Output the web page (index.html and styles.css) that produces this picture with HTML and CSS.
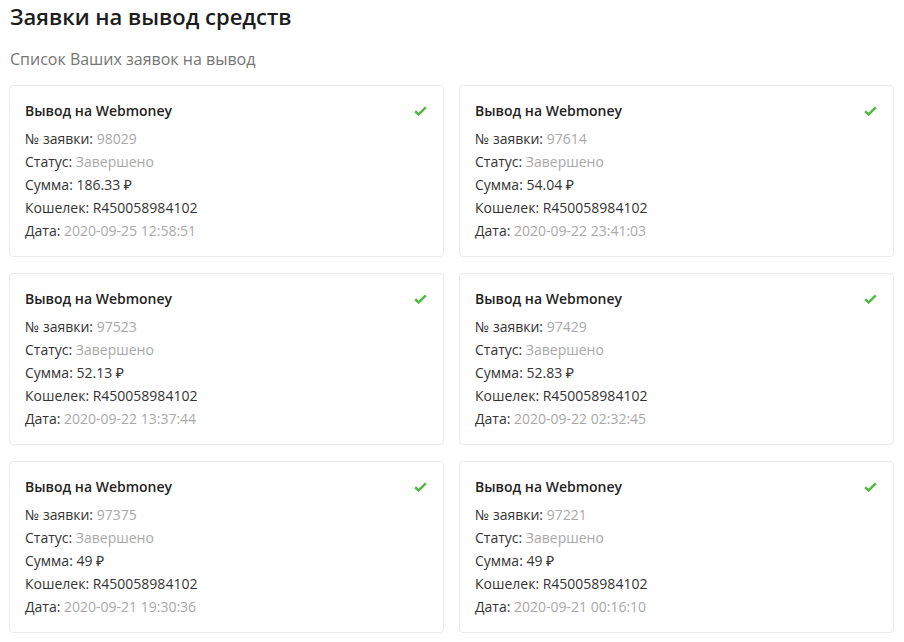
FILE: index.html
```html
<!DOCTYPE html>
<html lang="ru">
<head>
<meta charset="utf-8">
<title>Заявки на вывод средств</title>
<link rel="stylesheet" href="styles.css">
</head>
<body>
<div class="page">
  <h1 class="title">Заявки на вывод средств</h1>
  <p class="subtitle">Список Ваших заявок на вывод</p>
  <div class="grid">
    <div class="card">
      <div class="card-head"><span class="card-title">Вывод на Webmoney</span><svg class="check" width="13" height="10" viewBox="0 0 13 10"><path d="M1.2 5.2 L4.6 8.4 L11.8 1.4" fill="none" stroke="#55b846" stroke-width="2.6" stroke-linejoin="miter"/></svg></div>
      <div class="row">№ заявки: <span class="muted">98029</span></div>
      <div class="row">Статус: <span class="muted">Завершено</span></div>
      <div class="row">Сумма: 186.33 ₽</div>
      <div class="row">Кошелек: R450058984102</div>
      <div class="row">Дата: <span class="muted">2020-09-25 12:58:51</span></div>
    </div>
    <div class="card">
      <div class="card-head"><span class="card-title">Вывод на Webmoney</span><svg class="check" width="13" height="10" viewBox="0 0 13 10"><path d="M1.2 5.2 L4.6 8.4 L11.8 1.4" fill="none" stroke="#55b846" stroke-width="2.6" stroke-linejoin="miter"/></svg></div>
      <div class="row">№ заявки: <span class="muted">97614</span></div>
      <div class="row">Статус: <span class="muted">Завершено</span></div>
      <div class="row">Сумма: 54.04 ₽</div>
      <div class="row">Кошелек: R450058984102</div>
      <div class="row">Дата: <span class="muted">2020-09-22 23:41:03</span></div>
    </div>
    <div class="card">
      <div class="card-head"><span class="card-title">Вывод на Webmoney</span><svg class="check" width="13" height="10" viewBox="0 0 13 10"><path d="M1.2 5.2 L4.6 8.4 L11.8 1.4" fill="none" stroke="#55b846" stroke-width="2.6" stroke-linejoin="miter"/></svg></div>
      <div class="row">№ заявки: <span class="muted">97523</span></div>
      <div class="row">Статус: <span class="muted">Завершено</span></div>
      <div class="row">Сумма: 52.13 ₽</div>
      <div class="row">Кошелек: R450058984102</div>
      <div class="row">Дата: <span class="muted">2020-09-22 13:37:44</span></div>
    </div>
    <div class="card">
      <div class="card-head"><span class="card-title">Вывод на Webmoney</span><svg class="check" width="13" height="10" viewBox="0 0 13 10"><path d="M1.2 5.2 L4.6 8.4 L11.8 1.4" fill="none" stroke="#55b846" stroke-width="2.6" stroke-linejoin="miter"/></svg></div>
      <div class="row">№ заявки: <span class="muted">97429</span></div>
      <div class="row">Статус: <span class="muted">Завершено</span></div>
      <div class="row">Сумма: 52.83 ₽</div>
      <div class="row">Кошелек: R450058984102</div>
      <div class="row">Дата: <span class="muted">2020-09-22 02:32:45</span></div>
    </div>
    <div class="card">
      <div class="card-head"><span class="card-title">Вывод на Webmoney</span><svg class="check" width="13" height="10" viewBox="0 0 13 10"><path d="M1.2 5.2 L4.6 8.4 L11.8 1.4" fill="none" stroke="#55b846" stroke-width="2.6" stroke-linejoin="miter"/></svg></div>
      <div class="row">№ заявки: <span class="muted">97375</span></div>
      <div class="row">Статус: <span class="muted">Завершено</span></div>
      <div class="row">Сумма: 49 ₽</div>
      <div class="row">Кошелек: R450058984102</div>
      <div class="row">Дата: <span class="muted">2020-09-21 19:30:36</span></div>
    </div>
    <div class="card">
      <div class="card-head"><span class="card-title">Вывод на Webmoney</span><svg class="check" width="13" height="10" viewBox="0 0 13 10"><path d="M1.2 5.2 L4.6 8.4 L11.8 1.4" fill="none" stroke="#55b846" stroke-width="2.6" stroke-linejoin="miter"/></svg></div>
      <div class="row">№ заявки: <span class="muted">97221</span></div>
      <div class="row">Статус: <span class="muted">Завершено</span></div>
      <div class="row">Сумма: 49 ₽</div>
      <div class="row">Кошелек: R450058984102</div>
      <div class="row">Дата: <span class="muted">2020-09-21 00:16:10</span></div>
    </div>
  </div>
</div>
</body>
</html>
```
FILE: styles.css
```css
html, body {
  margin: 0;
  padding: 0;
  background: #ffffff;
}
body {
  font-family: "Open Sans", "Noto Sans", "DejaVu Sans", sans-serif;
  color: #2b2b2b;
}
.page {
  padding: 2px 10px 0 9px;
}
.title {
  margin: 0 0 0 1px;
  font-size: 22px;
  line-height: 29px;
  font-weight: 600;
  color: #1c1c1c;
}
.subtitle {
  margin: 17px 0 15px 1px;
  font-size: 16px;
  line-height: 22px;
  color: #757575;
}
.grid {
  display: grid;
  grid-template-columns: 1fr 1fr;
  column-gap: 15px;
  row-gap: 16px;
}
.card {
  border: 1px solid #ebebeb;
  border-radius: 4px;
  padding: 13px 15px 14px;
  font-size: 14px;
  line-height: 23px;
}
.card-head {
  display: flex;
  align-items: center;
  justify-content: space-between;
  margin-bottom: 5px;
}
.card-title {
  font-weight: 600;
  color: #1f1f1f;
}
.check {
  display: block;
  margin-right: 1px;
}
.row {
  color: #333333;
}
.muted {
  color: #a9a9a9;
}
```
